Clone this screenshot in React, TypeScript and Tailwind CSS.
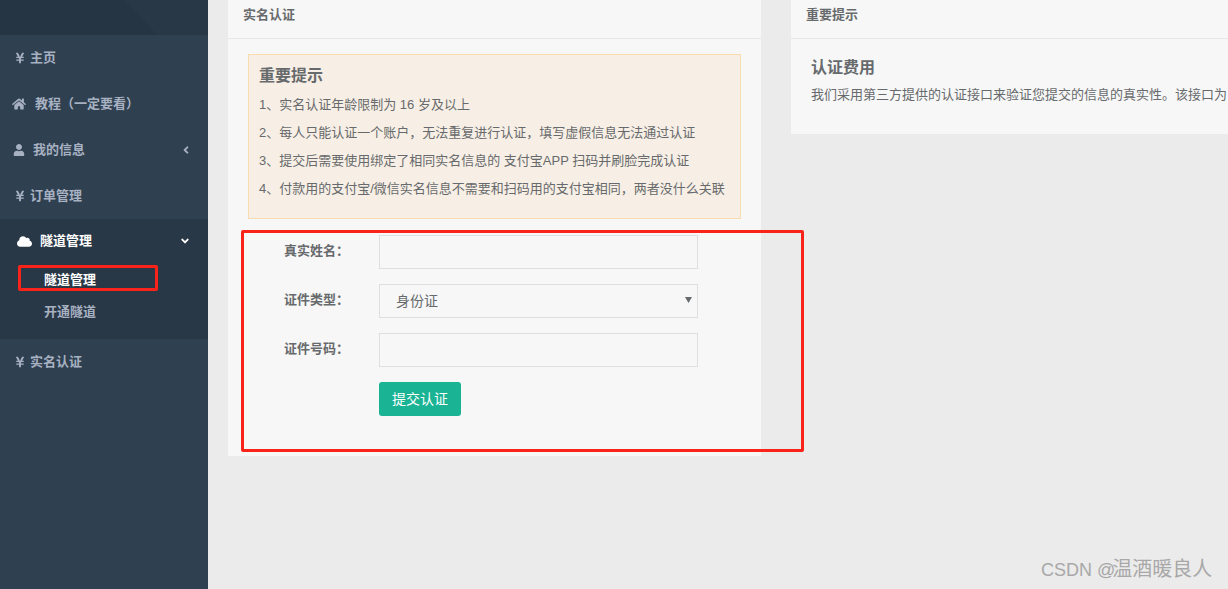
import React from 'react'
import { FaAngleDown, FaAngleLeft, FaCloud, FaHome, FaUser, FaYenSign } from 'react-icons/fa'

function NavItem({ icon, label, gap, arrow }: { icon: React.ReactNode; label: string; gap: string; arrow?: boolean }) {
    return (
        <a className="flex h-[46px] items-center pb-[1px] pl-[13px] pr-[16px] text-[13px] font-bold text-[#a7b1c2]">
            <span className="flex w-[14px] shrink-0 justify-start">{icon}</span>
            <span className={gap}>{label}</span>
            {arrow && <FaAngleLeft className="ml-auto text-[12px]" />}
        </a>
    )
}

function Sidebar() {
    return (
        <aside className="h-full w-[208px] shrink-0 bg-[#2f4050]">
            <div className="relative h-[35px] overflow-hidden bg-[#293846]">
                <svg className="absolute inset-0" width="208" height="35" viewBox="0 0 208 35">
                    <polygon points="0,0 125,0 157,35 0,35" fill="#263544" />
                </svg>
            </div>
            <NavItem icon={<FaYenSign className="ml-[1px] text-[12px]" />} label="主页" gap="ml-[3px]" />
            <NavItem icon={<FaHome className="-ml-[1px] text-[14px]" />} label="教程（一定要看）" gap="ml-[8px]" />
            <NavItem icon={<FaUser className="text-[12px]" />} label="我的信息" gap="ml-[6px]" arrow />
            <NavItem icon={<FaYenSign className="ml-[1px] text-[12px]" />} label="订单管理" gap="ml-[3px]" />
            <div className="h-[120px] bg-[#293846]">
                <div className="flex h-[45px] items-center pb-[1px] pl-[17px] pr-[17px] text-[13px] font-bold text-white">
                    <FaCloud className="text-[15px]" />
                    <span className="ml-[8px]">隧道管理</span>
                    <FaAngleDown className="ml-auto text-[12px]" />
                </div>
                <div className="flex h-[32px] items-center pl-[44px] text-[13px] font-bold text-white">隧道管理</div>
                <div className="flex h-[32px] items-center pl-[44px] text-[13px] font-bold text-[#a7b1c2]">开通隧道</div>
            </div>
            <NavItem icon={<FaYenSign className="ml-[1px] text-[12px]" />} label="实名认证" gap="ml-[3px]" />
        </aside>
    )
}

function Field({ label, children }: { label: string; children: React.ReactNode }) {
    return (
        <div className="flex h-[34px] items-start">
            <label className="w-[95px] pt-[6px] text-[13px] leading-[19px] font-bold text-[#676a6c]">{label}</label>
            {children}
        </div>
    )
}

function IdForm() {
    return (
        <form className="flex flex-col gap-[15px] pl-[56px] pt-[16px]">
            <Field label="真实姓名：">
                <input className="h-[34px] w-[319px] border border-[#dfdfdf] bg-transparent px-3 text-[13px] outline-none" />
            </Field>
            <Field label="证件类型：">
                <div className="relative">
                    <select className="h-[34px] w-[319px] appearance-none border border-[#dfdfdf] bg-transparent pl-[16px] text-[14px] text-[#676a6c] outline-none">
                        <option>身份证</option>
                    </select>
                    <svg className="absolute left-[306px] top-[12px]" width="7" height="7" viewBox="0 0 7 7">
                        <polygon points="0,1 7,1 3.5,7" fill="#676a6c" />
                    </svg>
                </div>
            </Field>
            <Field label="证件号码：">
                <input className="h-[34px] w-[319px] border border-[#dfdfdf] bg-transparent px-3 text-[13px] outline-none" />
            </Field>
            <div className="pl-[95px]">
                <button type="button" className="h-[34px] w-[82px] rounded-[3px] bg-[#1ab394] text-[14px] text-white">
                    提交认证
                </button>
            </div>
        </form>
    )
}

export default function App() {
    return (
        <div
            className="relative flex h-[589px] w-[1228px] overflow-hidden bg-[#ebebeb] text-[#676a6c]"
            style={{ fontFamily: '"Liberation Sans", "Noto Sans CJK SC", sans-serif' }}
        >
            <Sidebar />
            <main className="flex min-w-0 flex-1 items-start gap-[30px] pl-[20px]">
                <section className="h-[456px] w-[533px] shrink-0 bg-[#f7f7f7]">
                    <h5 className="flex h-[39px] items-center border-b border-[#e7e7e7] pb-[8px] pl-[15px] text-[13px] font-bold">实名认证</h5>
                    <div className="mx-[20px] mt-[15px] h-[165px] border border-[#f8dcb0] bg-[#f7efe5] pl-[10px] pt-[11px]">
                        <h4 className="text-[16px] leading-[20px] font-bold">重要提示</h4>
                        <ul className="mt-[5px] text-[13px] leading-[28px]">
                            <li>1、实名认证年龄限制为 16 岁及以上</li>
                            <li>2、每人只能认证一个账户，无法重复进行认证，填写虚假信息无法通过认证</li>
                            <li>3、提交后需要使用绑定了相同实名信息的 支付宝APP 扫码并刷脸完成认证</li>
                            <li>4、付款用的支付宝/微信实名信息不需要和扫码用的支付宝相同，两者没什么关联</li>
                        </ul>
                    </div>
                    <IdForm />
                </section>
                <section className="h-[134px] min-w-0 flex-1 bg-[#f7f7f7]">
                    <h5 className="flex h-[39px] items-center border-b border-[#e7e7e7] pb-[8px] pl-[15px] text-[13px] font-bold">重要提示</h5>
                    <div className="pl-[20px] pt-[19px]">
                        <h4 className="text-[16px] leading-[20px] font-bold">认证费用</h4>
                        <p className="mt-[7px] text-[13px] leading-[20px] whitespace-nowrap">我们采用第三方提供的认证接口来验证您提交的信息的真实性。该接口为</p>
                    </div>
                </section>
            </main>
            <div className="absolute left-[18px] top-[265px] h-[26px] w-[140px] rounded-[2px] border-[3px] border-[#f9231a]" />
            <div className="absolute left-[241px] top-[230px] h-[222px] w-[563px] rounded-[2px] border-[3px] border-[#f9231a]" />
            <span className="absolute left-[1041px] top-[556px] text-[18px] leading-[26px] text-[#a8a8a8]">
                CSDN @<span className="-ml-[3px] text-[20px]">温酒暖良人</span>
            </span>
        </div>
    )
}
